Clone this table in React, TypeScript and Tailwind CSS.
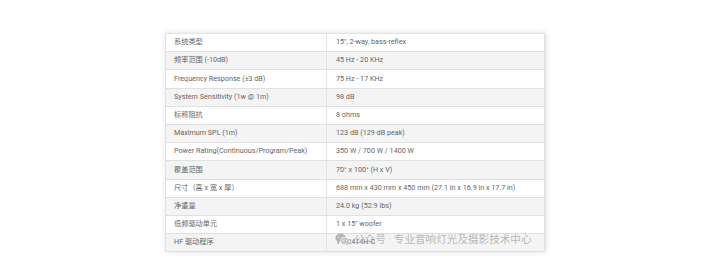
const rows: [string, string][] = [
  ["系统类型", "15\", 2-way, bass-reflex"],
  ["频率范围 (-10dB)", "45 Hz - 20 KHz"],
  ["Frequency Response (±3 dB)", "75 Hz - 17 KHz"],
  ["System Sensitivity (1w @ 1m)", "98 dB"],
  ["标称阻抗", "8 ohms"],
  ["Maximum SPL (1m)", "123 dB (129 dB peak)"],
  ["Power Rating(Continuous/Program/Peak)", "350 W / 700 W / 1400 W"],
  ["覆盖范围", "70° x 100° (H x V)"],
  ["尺寸（高 x 宽 x 厚）", "688 mm x 430 mm x 450 mm (27.1 in x 16.9 in x 17.7 in)"],
  ["净重量", "24.0 kg (52.9 lbs)"],
  ["低频驱动单元", "1 x 15\" woofer"],
  ["HF 驱动程序", "1 x 2414H-C"],
];

function WechatIcon() {
  return (
    <svg width="15" height="13" viewBox="0 0 24 21" className="shrink-0">
      <ellipse cx="9" cy="8" rx="8.5" ry="7" fill="#b5b5b5" />
      <path d="M4 13 L3 17 L8 14 Z" fill="#b5b5b5" />
      <ellipse cx="16" cy="13" rx="7.5" ry="6" fill="#c8c8c8" stroke="#fff" strokeWidth="1" />
      <path d="M20 17 L21.5 20 L17 18 Z" fill="#c8c8c8" />
      <circle cx="6" cy="6.5" r="1" fill="#fff" />
      <circle cx="12" cy="6.5" r="1" fill="#fff" />
      <circle cx="13.5" cy="12" r="0.8" fill="#fff" />
      <circle cx="18.5" cy="12" r="0.8" fill="#fff" />
    </svg>
  );
}

export default function App() {
  return (
    <div className="w-[721px] h-[271px] bg-white overflow-hidden" style={{ fontFamily: "Roboto, 'Noto Sans CJK SC', sans-serif" }}>
      <div className="pt-[33px] pl-[165px]">
        <div className="relative w-[380px] border-t border-[#e4e4e4] shadow-[1px_0_5px_rgba(0,0,0,0.14)]">
          {rows.map(([k, v], i) => (
            <div
              key={i}
              className={`flex h-[18.2px] items-center border-b border-l border-r border-[#e0e0e0] text-[7.2px] text-[#666666] ${i % 2 === 1 ? "bg-[#f4f4f4]" : "bg-white"}`}
            >
              <div className="w-[161px] h-full flex items-center pl-[8px] border-r border-[#e4e4e4]">{k}</div>
              <div className="flex-1 h-full flex items-center pl-[9px]">{v}</div>
            </div>
          ))}
          <div className="absolute left-[170px] top-[198px] flex items-center gap-[4px] whitespace-nowrap text-[10.6px] text-[#b0b0b0]/90">
            <WechatIcon />
            <span>公众号 · 专业音响灯光及摄影技术中心</span>
          </div>
        </div>
      </div>
    </div>
  );
}
